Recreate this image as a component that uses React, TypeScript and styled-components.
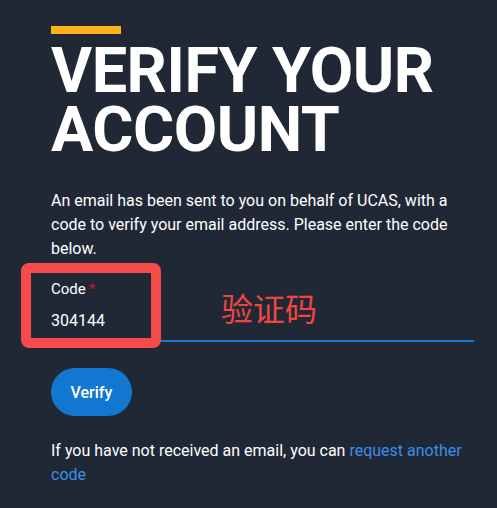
import styled, { createGlobalStyle } from 'styled-components';

const GlobalStyle = createGlobalStyle`
  html, body {
    margin: 0;
    padding: 0;
    background-color: #202836;
  }
  body {
    font-family: Roboto, 'Liberation Sans', sans-serif;
    color: #ffffff;
  }
`;

const Page = styled.div`
  min-height: 508px;
  box-sizing: border-box;
  padding: 26px 23px 20px 51px;
  background-color: #202836;
`;

const AccentBar = styled.div`
  width: 70px;
  height: 8px;
  background-color: #fbb117;
`;

const Title = styled.h1`
  margin: 7px 0 0;
  font-size: 63px;
  font-weight: 700;
  line-height: 59px;
  letter-spacing: -0.5px;
  color: #ffffff;
`;

const Intro = styled.p`
  margin: 30px 0 0;
  font-size: 16px;
  line-height: 24px;
  color: #ffffff;
`;

const Field = styled.div`
  position: relative;
  margin-top: 18px;
  border-bottom: 2px solid #1976d2;
`;

const Label = styled.label`
  display: block;
  font-size: 15px;
  line-height: 20px;
  color: #ffffff;
`;

const Required = styled.span`
  color: #d0122f;
  margin-left: 3px;
`;

const Value = styled.div`
  margin-top: 10px;
  padding-bottom: 7px;
  font-size: 16px;
  line-height: 24px;
  color: #ffffff;
`;

const Highlight = styled.div`
  position: absolute;
  left: -30px;
  top: -16px;
  width: 140px;
  height: 85px;
  box-sizing: border-box;
  border: 10px solid #f54b4b;
  border-radius: 8px;
`;

const Note = styled.span`
  position: absolute;
  left: 170px;
  top: 10px;
  font-family: 'Noto Sans CJK SC', sans-serif;
  font-size: 32px;
  line-height: 36px;
  color: #f0463f;
`;

const Button = styled.button`
  display: block;
  margin-top: 26px;
  height: 48px;
  padding: 0 19.5px;
  border: none;
  border-radius: 24px;
  background-color: #1177d1;
  color: #ffffff;
  font-family: Roboto, 'Liberation Sans', sans-serif;
  font-size: 16px;
  font-weight: 500;
`;

const Footer = styled.p`
  margin: 23px 0 0;
  font-size: 16px;
  line-height: 24px;
  color: #ffffff;
`;

const Link = styled.a`
  color: #3b8eea;
  text-decoration: none;
`;

export default function App() {
  return (
    <>
      <GlobalStyle />
      <Page>
        <AccentBar />
        <Title>
          VERIFY YOUR
          <br />
          ACCOUNT
        </Title>
        <Intro>
          An email has been sent to you on behalf of UCAS, with a code to verify your email
          address. Please enter the code below.
        </Intro>
        <Field>
          <Label>
            Code<Required>*</Required>
          </Label>
          <Value>304144</Value>
          <Highlight />
          <Note>验证码</Note>
        </Field>
        <Button>Verify</Button>
        <Footer>
          If you have not received an email, you can <Link href="#">request another code</Link>
        </Footer>
      </Page>
    </>
  );
}
